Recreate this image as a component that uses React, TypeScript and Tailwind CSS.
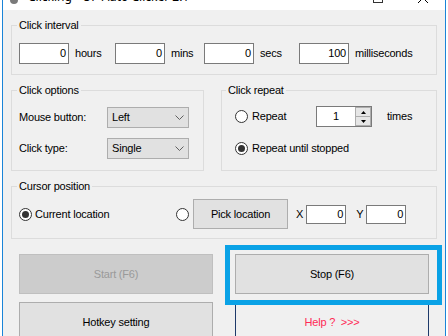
import React from "react"

function Group({ title, className, children }: { title: string; className: string; children: React.ReactNode }) {
    return (
        <fieldset className={`border border-[#dcdcdc] ${className}`}>
            <legend className="-ml-[2px] px-[2px] leading-[13px]">{title}</legend>
            {children}
        </fieldset>
    )
}

function TextBox({ value, className }: { value: string; className: string }) {
    return (
        <div className={`flex items-center justify-end border border-[#7a7a7a] bg-white pr-[2px] ${className}`}>
            {value}
        </div>
    )
}

function Radio({ checked }: { checked?: boolean }) {
    return (
        <div className="flex h-[13px] w-[13px] shrink-0 items-center justify-center rounded-full border border-[#333333] bg-white">
            {checked && <div className="h-[7px] w-[7px] rounded-full bg-[#333333]" />}
        </div>
    )
}

function Select({ value }: { value: string }) {
    return (
        <div className="flex h-[21px] w-[82px] items-center justify-between border border-[#adadad] bg-[#e1e1e1] pl-[4px] pr-[4px]">
            <span>{value}</span>
            <svg width="9" height="5" viewBox="0 0 9 5">
                <polyline points="0.5,0.5 4.5,4.5 8.5,0.5" fill="none" stroke="#606060" strokeWidth="1" />
            </svg>
        </div>
    )
}

function Spin() {
    return (
        <div className="flex h-[21px] w-[56px] border border-[#7a7a7a] bg-white">
            <div className="flex flex-1 items-center justify-center">1</div>
            <div className="flex w-[16px] flex-col">
                <div className="flex flex-1 items-center justify-center border border-[#adadad] bg-[#e6e6e6]">
                    <svg width="5" height="3" viewBox="0 0 5 3"><polygon points="2.5,0 5,3 0,3" fill="#000" /></svg>
                </div>
                <div className="flex flex-1 items-center justify-center border border-t-0 border-[#adadad] bg-[#e6e6e6]">
                    <svg width="5" height="3" viewBox="0 0 5 3"><polygon points="0,0 5,0 2.5,3" fill="#000" /></svg>
                </div>
            </div>
        </div>
    )
}

export default function App() {
    return (
        <div className="relative flex h-[336px] w-[448px] overflow-hidden bg-white font-['Liberation_Sans',Arial,sans-serif] text-[11px] tracking-[-0.2px] text-black">
            <div className="ml-[2px] flex h-[336px] w-[444px] flex-col overflow-hidden border-x border-[#1a84d8] bg-[#f0f0f0]">
                {/* title bar, mostly scrolled off */}
                <div className="flex h-[10px] shrink-0 items-start overflow-hidden bg-white">
                    <div className="ml-[7px] -mt-[4px] h-[8px] w-[8px] rounded-full bg-[#7a7a7a]" />
                    <span className="ml-[10px] -mt-[9px] font-['Noto_Sans',sans-serif] text-[12px] leading-[12px] tracking-normal">
                        Clicking - OP Auto Clicker 2.1
                    </span>
                    <div className="ml-auto -mt-[7px] h-[10px] w-[10px] border border-[#333333]" />
                    <svg className="ml-[35px] mr-[17px] -mt-[7px]" width="10" height="10" viewBox="0 0 10 10">
                        <path d="M0 0L10 10M10 0L0 10" stroke="#000" strokeWidth="1" />
                    </svg>
                </div>

                <div className="flex flex-col px-[8px]">
                    <Group title="Click interval" className="mt-[9px] pl-[7px] pr-[7px] pt-[11px] pb-[10px]">
                        <div className="flex h-[21px] items-center">
                            <TextBox value="0" className="h-[21px] w-[50px]" />
                            <span className="w-[46px] pl-[6px]">hours</span>
                            <TextBox value="0" className="h-[21px] w-[50px]" />
                            <span className="w-[39px] pl-[6px]">mins</span>
                            <TextBox value="0" className="h-[21px] w-[50px]" />
                            <span className="w-[45px] pl-[6px]">secs</span>
                            <TextBox value="100" className="h-[21px] w-[50px]" />
                            <span className="pl-[6px]">milliseconds</span>
                        </div>
                    </Group>

                    <div className="mt-[9px] flex gap-[17px]">
                        <Group title="Click options" className="w-[193px] pl-[7px] pr-[7px] pt-[10px] pb-[11px]">
                            <div className="flex h-[21px] items-center">
                                <span className="w-[88px]">Mouse button:</span>
                                <Select value="Left" />
                            </div>
                            <div className="mt-[10px] flex h-[21px] items-center">
                                <span className="w-[88px]">Click type:</span>
                                <Select value="Single" />
                            </div>
                        </Group>
                        <Group title="Click repeat" className="flex-1 pl-[6px] pr-[6px] pt-[9px] pb-[11px]">
                            <div className="flex h-[21px] items-center pl-[7px]">
                                <div className="flex w-[81px] items-center">
                                    <Radio />
                                    <span className="ml-[4px]">Repeat</span>
                                </div>
                                <Spin />
                                <span className="ml-[15px]">times</span>
                            </div>
                            <div className="mt-[11px] flex h-[21px] items-center pl-[7px]">
                                <Radio checked />
                                <span className="ml-[4px]">Repeat until stopped</span>
                            </div>
                        </Group>
                    </div>

                    <Group title="Cursor position" className="mt-[9px] pl-[7px] pr-[7px] pt-[6px] pb-[9px]">
                        <div className="flex h-[30px] items-center">
                            <div className="flex w-[157px] items-center">
                                <Radio checked />
                                <span className="ml-[3px]">Current location</span>
                            </div>
                            <Radio />
                            <button className="ml-[4px] h-[30px] w-[95px] border border-[#adadad] bg-[#e1e1e1]">
                                Pick location
                            </button>
                            <span className="ml-[8px]">X</span>
                            <TextBox value="0" className="ml-[3px] h-[19px] w-[40px]" />
                            <span className="ml-[10px]">Y</span>
                            <TextBox value="0" className="ml-[3px] h-[19px] w-[40px]" />
                        </div>
                    </Group>

                    <div className="mt-[15px] grid grid-cols-[194px_194px] gap-x-[22px] gap-y-[8px] pl-[8px]">
                        <button className="h-[40px] border border-[#bfbfbf] bg-[#cccccc] text-[#9a9a9a]">Start (F6)</button>
                        <button className="h-[40px] border border-[#adadad] bg-[#e1e1e1]">Stop (F6)</button>
                        <button className="h-[40px] border border-[#adadad] bg-[#e1e1e1]">Hotkey setting</button>
                        <button className="h-[40px] border border-[#1e3a6a] bg-[#f0f0f0] text-[#ff2a55]">Help ?&nbsp; &gt;&gt;&gt;</button>
                    </div>
                </div>
            </div>

            {/* highlight annotation around Stop */}
            <div className="absolute left-[225px] top-[245px] h-[60px] w-[217px] border-[5px] border-[#0aa2e6]" />
        </div>
    )
}
